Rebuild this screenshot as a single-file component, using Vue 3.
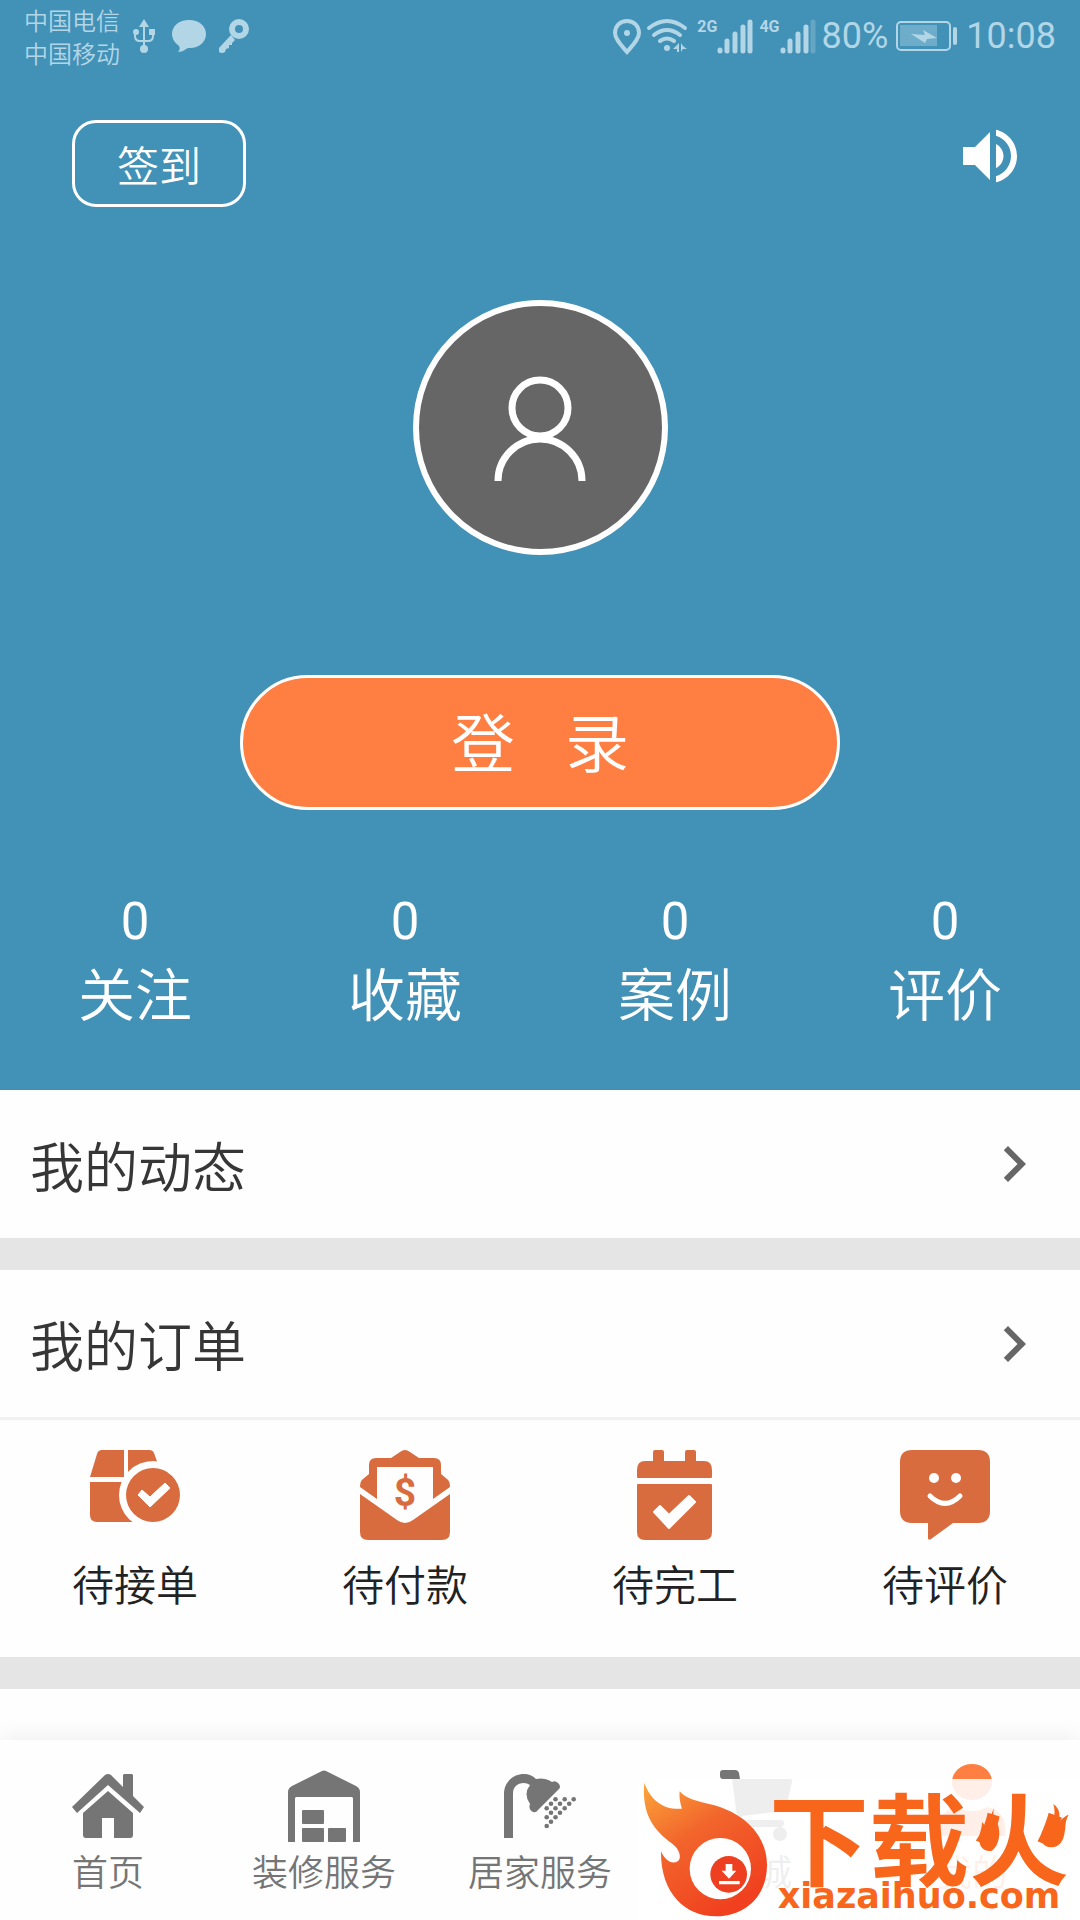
<script setup>

import { ref } from 'vue';

const stats = ref([
  { label: '关注', count: 0 },
  { label: '收藏', count: 0 },
  { label: '案例', count: 0 },
  { label: '评价', count: 0 }
]);

const orders = ref([
  { label: '待接单', icon: 'box' },
  { label: '待付款', icon: 'pay' },
  { label: '待完工', icon: 'calendar' },
  { label: '待评价', icon: 'smile' }
]);

const tabs = ref([
  { label: '首页', icon: 'home' },
  { label: '装修服务', icon: 'house' },
  { label: '居家服务', icon: 'shower' },
  { label: '商城', icon: 'cart' },
  { label: '我的', icon: 'me' }
]);

const activeTab = ref('我的');

// water drops of the shower icon
const drops = [
  [51.5, 29.3], [60.7, 29.3], [69.7, 29.3],
  [47, 33.7], [56, 33.7], [65.2, 33.7],
  [42.7, 38.3], [51.5, 38.3], [60.7, 38.3],
  [47, 42.7], [56, 42.7],
  [42.7, 47.3], [51.5, 47.3],
  [47, 51.7],
  [42.7, 56]
];

</script>

<template>
  <div class="page">
    <header class="profile">
      <div class="status_bar">
        <div class="status_left">
          <div class="carriers">
            <span>中国电信</span>
            <span>中国移动</span>
          </div>
          <svg class="usb" width="24" height="36" viewBox="0 0 24 36">
            <path d="M12 5V31M3 13v5q0 5 5 5h8q5 0 5-5v-5" fill="none" stroke="currentColor" stroke-width="2" />
            <path d="M12 1l5 8H7z" fill="currentColor" />
            <circle cx="12" cy="31" r="4" fill="currentColor" />
            <circle cx="4" cy="14" r="3" fill="currentColor" />
            <path d="M17 11h6v6h-6z" fill="currentColor" />
          </svg>
          <svg width="34" height="34" viewBox="0 0 34 34">
            <path d="M17 1c10 0 17 6 17 14s-7 14-16 14c-2 0-3 0-4 1-2 2-5 3-8 3 2-2 2-4 1-6-4-3-7-7-7-12C0 7 7 1 17 1z" fill="currentColor" />
          </svg>
          <svg width="32" height="36" viewBox="0 0 32 36">
            <circle cx="21" cy="11" r="7" fill="none" stroke="currentColor" stroke-width="6" />
            <path d="M13 17l4 5-3 3v2h-3v3L8 31l-1 3q-3 2-6 0v-4z" fill="currentColor" />
          </svg>
        </div>
        <div class="status_right">
          <svg width="28" height="36" viewBox="0 0 28 36">
            <path d="M14 3C7 3 2 8 2 15c0 6 6 12 12 19 6-7 12-13 12-19 0-7-5-12-12-12z" fill="none" stroke="currentColor" stroke-width="4" />
            <circle cx="14" cy="15" r="3" fill="currentColor" />
          </svg>
          <svg class="wifi" width="40" height="36" viewBox="0 0 40 36">
            <path d="M2 10q18-14 36 0M7 17q13-10 26 0M13 23q7-5 14 0" fill="none" stroke="currentColor" stroke-width="4" stroke-linecap="round" />
            <circle cx="20" cy="30" r="3" fill="currentColor" />
            <path d="M32 25v9h-2v-3h-4zM34 25v9l2-3h4l-4-3z" fill="currentColor" />
          </svg>
          <div class="signal">
            <span class="net">2G</span>
            <svg width="36" height="36" viewBox="0 0 36 36">
              <path d="M3 33v-1M10 33V23M18 33V16M26 33V9M33 33V4" fill="none" stroke="currentColor" stroke-width="5" stroke-linecap="round" />
            </svg>
          </div>
          <div class="signal">
            <span class="net">4G</span>
            <svg width="36" height="36" viewBox="0 0 36 36">
              <path d="M3 33v-1M10 33V23M18 33V16M26 33V9" fill="none" stroke="currentColor" stroke-width="5" stroke-linecap="round" />
              <path d="M33 33V4" fill="none" stroke="currentColor" stroke-opacity="0.3" stroke-width="5" stroke-linecap="round" />
            </svg>
          </div>
          <span class="status_text">80%</span>
          <svg class="battery" width="62" height="30" viewBox="0 0 62 30">
            <rect x="1" y="1" width="53" height="28" rx="4" fill="none" stroke="currentColor" stroke-width="2" />
            <rect x="4" y="4" width="37" height="21" fill="currentColor" fill-opacity="0.4" />
            <path d="M15 13l14 1-2-5 14 8-10 1-2 4z" fill="currentColor" />
            <rect x="57" y="6" width="4" height="18" rx="2" fill="currentColor" />
          </svg>
          <span class="status_text">10:08</span>
        </div>
      </div>

      <div class="top_bar">
        <button class="sign_button" type="button">签到</button>
        <button class="sound_button" type="button" aria-label="声音">
          <svg width="72" height="72" viewBox="0 0 24 24">
            <path fill="currentColor" d="M3 9v6h4l5 5V4L7 9H3zm13.5 3c0-1.77-1.02-3.29-2.5-4.03v8.05c1.48-.73 2.5-2.25 2.5-4.02zM14 3.23v2.06c2.89.86 5 3.54 5 6.71s-2.11 5.85-5 6.71v2.06c4.01-.91 7-4.49 7-8.77s-2.99-7.86-7-8.77z" />
          </svg>
        </button>
      </div>

      <div class="avatar">
        <svg width="96" height="108" viewBox="0 0 96 108">
          <circle cx="48" cy="34" r="28" fill="none" stroke="#fff" stroke-width="7" />
          <path d="M6 107a42 42 0 0 1 84 0" fill="none" stroke="#fff" stroke-width="7" />
        </svg>
      </div>

      <button class="login_button" type="button">登&nbsp;&nbsp;&nbsp;录</button>

      <div class="stats">
        <a v-for="stat in stats" :key="stat.label" href="#" class="stat">
          <span class="stat_count">{{ stat.count }}</span>
          <span class="stat_label">{{ stat.label }}</span>
        </a>
      </div>
    </header>

    <main class="content">
      <a href="#" class="row">
        <span>我的动态</span>
        <svg width="72" height="72" viewBox="0 0 24 24">
          <path d="M10 6L8.59 7.41 13.17 12l-4.58 4.59L10 18l6-6z" fill="#666" />
        </svg>
      </a>
      <div class="divider"></div>
      <a href="#" class="row row_line">
        <span>我的订单</span>
        <svg width="72" height="72" viewBox="0 0 24 24">
          <path d="M10 6L8.59 7.41 13.17 12l-4.58 4.59L10 18l6-6z" fill="#666" />
        </svg>
      </a>
      <div class="orders">
        <a v-for="order in orders" :key="order.label" href="#" class="order">
          <svg v-if="order.icon === 'box'" width="90" height="90" viewBox="0 0 90 90">
            <path d="M12 0h22v27H0L7 4q1-4 5-4zM38 0h21q4 0 5 3l5 14-31 10zM0 32h34l16 40H7q-7 0-7-7z" fill="currentColor" />
            <circle cx="63" cy="45" r="34" fill="#fff" />
            <circle cx="63" cy="45" r="27" fill="currentColor" />
            <path d="M48 45l4-5 8 7 15-14 5 5-20 19z" fill="#fff" stroke="#fff" stroke-linejoin="round" />
          </svg>
          <svg v-else-if="order.icon === 'pay'" width="90" height="90" viewBox="0 0 90 90">
            <path d="M17 49L0 37q0-6 3-8l6-5v-9q0-7 7-7h15l9-6q5-4 10 0l9 6h15q7 0 7 7v9l6 5q3 2 3 8L73 49V17H17z" fill="currentColor" />
            <path d="M0 44l37 26q8 6 16 0l37-26v38q0 8-8 8H8q-8 0-8-8z" fill="currentColor" />
            <text x="45" y="56" class="dollar" text-anchor="middle" fill="currentColor">$</text>
          </svg>
          <svg v-else-if="order.icon === 'calendar'" width="90" height="90" viewBox="0 0 90 90">
            <path d="M7 27v-7q0-9 8-9h8V2q0-2 2-2h7q2 0 2 2v9h21V2q0-2 2-2h7q2 0 2 2v9h8q8 0 8 9v7q0 1-1 1H8q-1 0-1-1z" fill="currentColor" />
            <path d="M8 34h73q1 0 1 1v47q0 8-8 8H15q-8 0-8-8V35q0-1 1-1z" fill="currentColor" />
            <path d="M24 62l6-6 9 9 20-19 6 6-26 26z" fill="#fff" stroke="#fff" stroke-width="2" stroke-linejoin="round" />
          </svg>
          <svg v-else width="90" height="90" viewBox="0 0 90 90">
            <path d="M12 0h66q12 0 12 12v49q0 12-12 12H53L31 89q-3 2-3-1V73H12Q0 73 0 61V12Q0 0 12 0z" fill="currentColor" />
            <circle cx="34" cy="28" r="5" fill="#fff" />
            <circle cx="56" cy="28" r="5" fill="#fff" />
            <path d="M30 46q15 15 30 0" fill="none" stroke="#fff" stroke-width="5" stroke-linecap="round" />
          </svg>
          <span>{{ order.label }}</span>
        </a>
      </div>
      <div class="divider"></div>
    </main>

    <nav class="tab_bar">
      <a
        v-for="tab in tabs"
        :key="tab.label"
        href="#"
        class="tab"
        :class="{ tab_active: tab.label === activeTab }"
        @click.prevent="activeTab = tab.label"
      >
        <svg width="72" height="72" viewBox="0 0 72 72" fill="currentColor">
          <g v-if="tab.icon === 'home'">
            <path d="M33 5q3-2 6 0l12 12V5l1-1h8l1 1v21l11 11-4 6-32-28L5 43l-5-6z" />
            <path d="M36 21l25 22v22q0 3-3 3H42V48H30v20H14q-3 0-3-3V43z" />
          </g>
          <g v-else-if="tab.icon === 'house'">
            <path d="M0 72V22q0-4 4-6L34 1q2-1 4 0l30 15q4 2 4 6v50h-7V28l-1-1H8l-1 1v44z" />
            <rect x="14" y="40" width="22" height="14" rx="1" />
            <rect x="14" y="58" width="22" height="14" rx="1" />
            <rect x="40" y="58" width="18" height="14" rx="1" />
          </g>
          <g v-else-if="tab.icon === 'shower'">
            <path d="M0 68V24C0 12 9 4 20 4q7 0 12 5 9-2 16 3 4-2 7 2 2 3 0 5L34 40q-2 3-5 2-5-3-3-8-7-10 0-19-3-2-6-2C13 13 9 17 9 24v44z" />
            <circle v-for="(drop, index) in drops" :key="index" :cx="drop[0]" :cy="drop[1]" r="2.3" />
          </g>
          <g v-else-if="tab.icon === 'cart'">
            <path d="M3 0h12q3 0 4 3l1 6h50q3 0 2 3l-6 26q-1 3-4 3l-40 5 1 4h38q3 0 3 3t-3 4H22q-3 0-4-3L12 9H3Q0 9 0 6V3q0-3 3-3z" />
            <circle cx="25" cy="64" r="7" />
            <circle cx="60" cy="64" r="7" />
          </g>
          <g v-else>
            <ellipse cx="36" cy="12" rx="20" ry="18" />
            <path d="M3 66v-9c0-12 8-18 18-20q15 8 30 0c10 2 18 8 18 20v9z" />
          </g>
        </svg>
        <span>{{ tab.label }}</span>
      </a>

      <!-- download site badge over the last tabs -->
      <div class="badge">
        <svg class="badge_logo" width="126" height="136" viewBox="36 150 378 408">
          <defs>
            <linearGradient id="flame" x1="0" y1="0" x2="0.6" y2="1">
              <stop offset="0" stop-color="#fba63a" />
              <stop offset="0.45" stop-color="#f2652c" />
              <stop offset="1" stop-color="#f0401f" />
            </linearGradient>
          </defs>
          <path d="M40 152C58 205 100 235 153 230C147 212 144 195 146 178C175 212 235 210 280 230C355 260 408 320 408 400C408 490 345 553 255 553C160 553 88 480 90 358C100 382 122 400 140 388C154 376 144 350 122 334C62 290 32 240 40 152z" fill="url(#flame)" />
          <circle cx="268" cy="410" r="92" fill="#fff" />
          <circle cx="293" cy="427" r="55" fill="#ee3f20" />
          <path d="M284 396h20v20h12l-22 24-22-24h12zM264 447h62v10h-62z" fill="#fff" />
        </svg>
        <div class="badge_text">
          <span class="badge_name">下载火</span>
          <span class="badge_site">xiazaihuo.com</span>
        </div>
        <svg class="badge_flames" width="90" height="47" viewBox="1050 222 270 141">
          <path d="M1100 222c-18 22-8 42 4 62 8 26 4 60-18 78-22 5-40-10-38-38 1-18 8-28 8-48 8 8 10 16 10 25 12-22 14-50 34-79z" fill="currentColor" />
          <path d="M1270 222c22 16 20 36 16 56 8-8 14-18 30-24-12 20-8 34-12 52-3 26-16 46-40 46-24 0-36-22-28-44 6-14 12-18 16-32 4 6 6 10 6 18 14-20 20-44 12-72z" fill="currentColor" />
        </svg>
      </div>
    </nav>
  </div>
</template>

<style>
body {
  margin: 0;
  background: #fff;
}
</style>

<style scoped>
.page {
  display: flex;
  flex-direction: column;
  min-height: 100vh;
  font-family: "Noto Sans CJK SC", sans-serif;
  font-weight: 350;
  background: #fefefe;
}

svg {
  display: block;
  flex: none;
  overflow: visible;
}

a {
  color: inherit;
  text-decoration: none;
}

button {
  font-family: inherit;
  font-weight: inherit;
  color: #fff;
  cursor: pointer;
}

.profile {
  display: flex;
  flex-direction: column;
  align-items: center;
  padding-bottom: 60px;
  color: #fff;
  background: #4291b7;
}

.status_bar {
  display: flex;
  justify-content: space-between;
  align-items: center;
  align-self: stretch;
  height: 72px;
  padding: 0 24px;
  color: #b2d6e6;
}

.status_left,
.status_right {
  display: flex;
  align-items: center;
}

.status_left {
  gap: 12px;
}

.usb {
  margin-right: 4px;
}

.carriers {
  display: flex;
  flex-direction: column;
  font-size: 24px;
  line-height: 33px;
}

.status_right {
  gap: 6px;
}

.wifi {
  margin-right: 4px;
}

.signal {
  display: flex;
  align-items: flex-start;
}

.net {
  font-family: Roboto, sans-serif;
  font-size: 16px;
  font-weight: 700;
  line-height: 18px;
}

.status_text {
  font-family: Roboto, sans-serif;
  font-size: 36px;
  font-weight: 400;
  line-height: 36px;
}

.battery {
  margin: 0 2px;
}

.top_bar {
  display: flex;
  justify-content: space-between;
  align-items: flex-start;
  align-self: stretch;
  padding: 48px 54px 0 72px;
}

.sign_button {
  width: 174px;
  height: 87px;
  padding: 0;
  font-size: 42px;
  line-height: 60px;
  border: 3px solid #fff;
  border-radius: 24px;
  background: none;
}

.sound_button {
  padding: 0;
  border: 0;
  background: none;
}

.avatar {
  display: flex;
  justify-content: center;
  align-items: center;
  box-sizing: border-box;
  width: 255px;
  height: 255px;
  margin-top: 93px;
  border: 6px solid #fff;
  border-radius: 50%;
  background: #666;
}

.login_button {
  width: 600px;
  max-width: 90%;
  height: 135px;
  margin-top: 120px;
  padding: 0;
  font-family: "Noto Sans", "Noto Sans CJK SC", sans-serif;
  font-size: 64px;
  line-height: 84px;
  border: 3px solid #fff;
  border-radius: 68px;
  background: #ff7f42;
}

.stats {
  display: flex;
  align-self: stretch;
  margin-top: 82px;
}

.stat {
  display: flex;
  flex: 1;
  flex-direction: column;
  align-items: center;
}

.stat_count {
  font-family: Roboto, sans-serif;
  font-size: 51px;
  font-weight: 400;
  line-height: 60px;
}

.stat_label {
  font-size: 57px;
  line-height: 78px;
}

.content {
  flex: 1;
}

.row {
  display: flex;
  justify-content: space-between;
  align-items: center;
  height: 148px;
  padding: 0 30px;
  font-size: 54px;
  color: #363636;
}

.row_line {
  height: 147px;
  border-bottom: 3px solid #f1f1f1;
}

.divider {
  height: 32px;
  background: #e5e5e5;
}

.orders {
  display: flex;
  padding: 30px 0 44px;
}

.order {
  display: flex;
  flex: 1;
  flex-direction: column;
  align-items: center;
  gap: 13px;
  font-size: 42px;
  line-height: 60px;
  color: #d96c3f;
}

.order span {
  color: #222;
}

.dollar {
  font-family: Roboto, sans-serif;
  font-size: 39px;
  font-weight: 700;
}

.tab_bar {
  position: relative;
  display: flex;
  padding: 30px 0 24px;
  background: #fefefe;
  box-shadow: 0 -4px 20px rgba(0, 0, 0, 0.06);
}

.tab {
  display: flex;
  flex: 1;
  flex-direction: column;
  align-items: center;
  gap: 2px;
  font-size: 36px;
  line-height: 52px;
  color: #757575;
}

.tab_active {
  color: #ff7f42;
}

.badge {
  position: absolute;
  right: 0;
  bottom: 0;
  display: flex;
  align-items: center;
  box-sizing: border-box;
  height: 141px;
  padding: 0 11px 0 5px;
  color: #f8661b;
  background: rgba(255, 255, 255, 0.88);
}

.badge_text {
  display: flex;
  flex-direction: column;
  align-items: center;
}

.badge_name {
  font-size: 100px;
  font-weight: 700;
  line-height: 92px;
}

.badge_site {
  font-family: "DejaVu Sans", sans-serif;
  font-size: 35px;
  font-weight: 700;
  line-height: 30px;
}

.badge_flames {
  position: absolute;
  top: 25px;
  right: 10px;
}
</style>
